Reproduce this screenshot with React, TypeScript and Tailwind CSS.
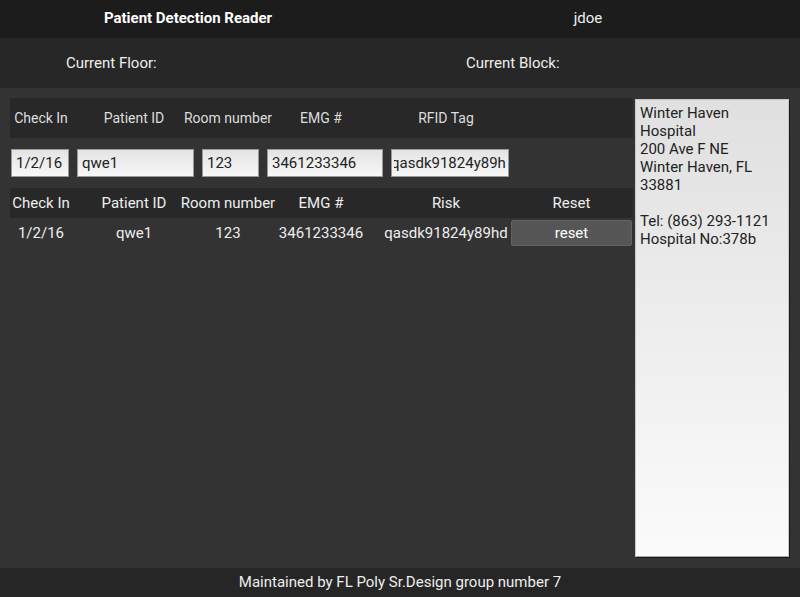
const cols = "grid grid-cols-[62px_124px_64px_122px_128px_123px]";

const formHeaders = ["Check In", "Patient ID", "Room number", "EMG #", "RFID Tag"];
const tableHeaders = ["Check In", "Patient ID", "Room number", "EMG #", "Risk", "Reset"];

const inputs = [
    { value: "1/2/16", width: "w-[58px]" },
    { value: "qwe1", width: "w-[117px]" },
    { value: "123", width: "w-[57px]" },
    { value: "3461233346", width: "w-[116px]" },
];

const row = ["1/2/16", "qwe1", "123", "3461233346", "qasdk91824y89hd"];

const hospital = [
    "Winter Haven",
    "Hospital",
    "200 Ave F NE",
    "Winter Haven, FL",
    "33881",
    "",
    "Tel: (863) 293-1121",
    "Hospital No:378b",
];

function Field({ value, width }: { value: string; width: string }) {
    return (
        <div
            className={`${width} flex h-[28px] items-center overflow-hidden whitespace-nowrap border border-[#9a9a9a] bg-gradient-to-b from-[#e4e4e4] to-[#f7f7f7] pl-[4px] text-[15px] text-[#222]`}
        >
            {value}
        </div>
    );
}

export default function App() {
    return (
        <div className="flex h-[597px] w-[800px] flex-col bg-[#333333] font-['Roboto',sans-serif] text-[#eeeeee]">
            <header className="flex h-[38px] shrink-0 items-center bg-[#1c1c1c] pb-[2px]">
                <div className="flex w-1/2 justify-center pr-[24px] text-[15px] font-bold text-white">
                    Patient Detection Reader
                </div>
                <div className="flex w-1/2 justify-center pr-[24px] text-[15px]">
                    jdoe
                </div>
            </header>

            <div className="flex h-[50px] shrink-0 items-center bg-[#272727] text-[15px]">
                <div className="w-1/2 pl-[66px]">Current Floor:</div>
                <div className="w-1/2 pl-[66px]">Current Block:</div>
            </div>

            <main className="flex flex-1 pl-[10px] pt-[10px]">
                <div className="w-[623px]">
                    <div className={`${cols} h-[40px] items-center bg-[#282828] text-[14px] text-[#dddddd]`}>
                        {formHeaders.map((h) => (
                            <div key={h} className="flex justify-center whitespace-nowrap">
                                {h}
                            </div>
                        ))}
                    </div>

                    <div className="flex h-[50px] items-center gap-2 pl-[1px]">
                        {inputs.map((f) => (
                            <Field key={f.value} value={f.value} width={f.width} />
                        ))}
                        <div className="flex h-[28px] w-[118px] items-center border border-[#9a9a9a] bg-gradient-to-b from-[#e4e4e4] to-[#f7f7f7] px-[2px] text-[15px] text-[#222]">
                            <div className="flex-1 overflow-hidden whitespace-nowrap">
                                <span className="-ml-[3px]">qasdk91824y89hd</span>
                            </div>
                        </div>
                    </div>

                    <div className={`${cols} h-[30px] items-center bg-[#282828] text-[15px]`}>
                        {tableHeaders.map((h) => (
                            <div key={h} className="flex justify-center whitespace-nowrap">
                                {h}
                            </div>
                        ))}
                    </div>

                    <div className={`${cols} h-[30px] items-center text-[15px]`}>
                        {row.map((v) => (
                            <div key={v} className="flex justify-center whitespace-nowrap">
                                {v}
                            </div>
                        ))}
                        <div className="ml-[1px] mr-[1px] flex h-[26px] items-center justify-center rounded-[2px] border border-[#636363] bg-[#565656] text-white">
                            reset
                        </div>
                    </div>
                </div>

                <aside className="ml-[2px] mt-[1px] h-[458px] w-[154px] border border-[#c8c8c8] border-b-[#a8a8a8] bg-gradient-to-b from-[#e0e0e0] to-[#fbfbfb] px-[4px] pt-[4px] text-[15px] leading-[18px] text-[#222] shadow-[1px_1px_0_#1a1a1a]">
                    {hospital.map((line, i) => (
                        <div key={i} className="h-[18px]">
                            {line}
                        </div>
                    ))}
                </aside>
            </main>

            <footer className="flex h-[29px] shrink-0 items-center justify-center bg-[#262626] text-[15px]">
                Maintained by FL Poly Sr.Design group number 7
            </footer>
        </div>
    );
}
